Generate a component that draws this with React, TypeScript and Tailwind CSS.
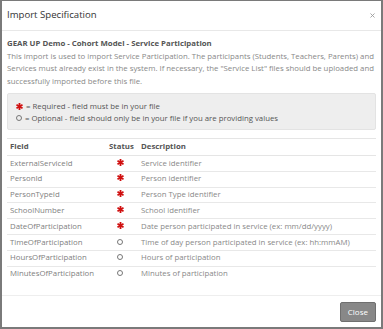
import { X } from 'lucide-react';

type Row = { field: string; required: boolean; description: string };

const rows: Row[] = [
  { field: 'ExternalServiceId', required: true, description: 'Service identifier' },
  { field: 'PersonId', required: true, description: 'Person identifier' },
  { field: 'PersonTypeId', required: true, description: 'Person Type identifier' },
  { field: 'SchoolNumber', required: true, description: 'School identifier' },
  { field: 'DateOfParticipation', required: true, description: 'Date person participated in service (ex: mm/dd/yyyy)' },
  { field: 'TimeOfParticipation', required: false, description: 'Time of day person participated in service (ex: hh:mmAM)' },
  { field: 'HoursOfParticipation', required: false, description: 'Hours of participation' },
  { field: 'MinutesOfParticipation', required: false, description: 'Minutes of participation' },
];

function Star() {
  return (
    <svg width="7" height="7" viewBox="0 0 10 10" className="inline-block">
      <g stroke="#d01010" strokeWidth="2.6" strokeLinecap="butt">
        <line x1="5" y1="0" x2="5" y2="10" />
        <line x1="0.7" y1="2.5" x2="9.3" y2="7.5" />
        <line x1="0.7" y1="7.5" x2="9.3" y2="2.5" />
      </g>
    </svg>
  );
}

function Ring() {
  return <span className="inline-block w-[6px] h-[6px] rounded-full border border-[#777]" />;
}

export default function App() {
  return (
    <div className="w-[383px] h-[329px] bg-white font-['Open_Sans',sans-serif] border-l-2 border-r-2 border-b-2 border-t border-[#7a7a7a] flex flex-col">
      <div className="h-[30px] flex items-center justify-between pl-[5px] pr-[5px] border-b border-[#e8e8e8]">
        <h1 className="text-[9.6px] text-[#333]">Import Specification</h1>
        <X className="w-[7px] h-[7px] text-[#999]" strokeWidth={3} />
      </div>

      <div className="flex-1 px-[5px] pt-[6px]">
        <p className="text-[7.8px] leading-[12.5px] font-bold text-[#555]">
          GEAR UP Demo - Cohort Model - Service Participation
        </p>
        <p className="text-[7.8px] leading-[12.5px] text-[#888]">
          This import is used to import Service Participation. The participants (Students, Teachers, Parents) and
          Services must already exist in the system. If necessary, the "Service List" files should be uploaded and
          successfully imported before this file.
        </p>

        <div className="mt-[6px] bg-[#eee] border border-[#e3e3e3] rounded-[2px] pl-[8px] pr-[10px] pt-[6px] pb-[5px] text-[7.8px] leading-[12px] text-[#555]">
          <div className="flex items-center gap-[3px]">
            <Star />
            <span>= Required - field must be in your file</span>
          </div>
          <div className="flex items-center gap-[3px]">
            <Ring />
            <span>= Optional - field should only be in your file if you are providing values</span>
          </div>
        </div>

        <table className="mt-[8px] w-full border-collapse text-[7.8px] text-[#888]">
          <thead>
            <tr className="border-t border-b border-[#e5e5e5] h-[17px]">
              <th className="text-left font-bold text-[#555] pl-[3px] w-[102px]">Field</th>
              <th className="text-left font-bold text-[#555] w-[32px]">Status</th>
              <th className="text-left font-bold text-[#555]">Description</th>
            </tr>
          </thead>
          <tbody>
            {rows.map((r) => (
              <tr key={r.field} className="border-b border-[#e8e8e8] h-[15.8px] last:border-b-0">
                <td className="pl-[3px] text-[#808080]">{r.field}</td>
                <td className="text-left pl-[8px]">
                  <span className="inline-flex items-center justify-center pt-[1px]">
                    {r.required ? <Star /> : <Ring />}
                  </span>
                </td>
                <td>{r.description}</td>
              </tr>
            ))}
          </tbody>
        </table>
      </div>

      <div className="h-[32px] border-t border-[#eee] flex items-center justify-end pr-[5px]">
        <button className="h-[20px] px-[7px] bg-[#888] border border-[#6f6f6f] rounded-[2px] text-[8px] text-white">
          Close
        </button>
      </div>
    </div>
  );
}
